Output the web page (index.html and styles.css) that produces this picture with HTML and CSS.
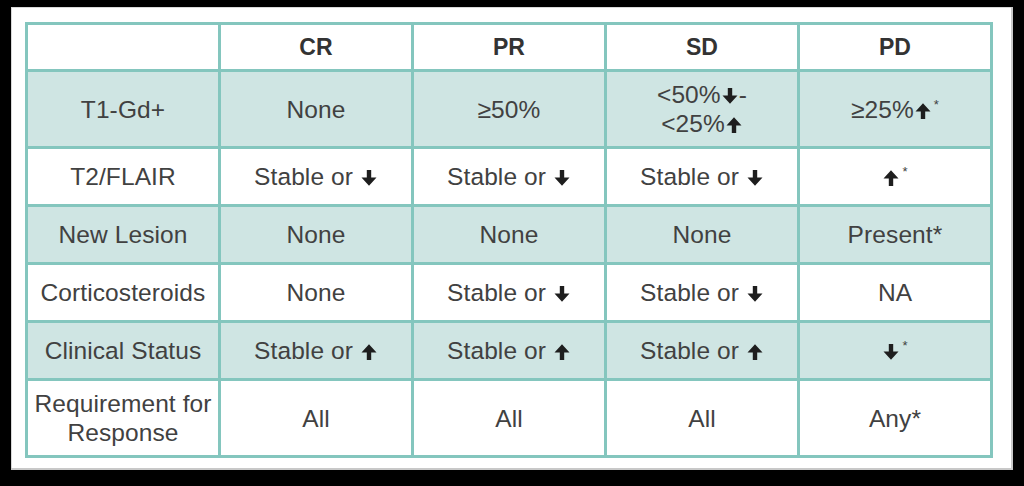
FILE: index.html
```html
<!DOCTYPE html>
<html>
<head>
<meta charset="utf-8">
<link rel="stylesheet" href="styles.css">
</head>
<body>
<svg width="0" height="0" class="defs">
  <defs>
    <symbol id="dn" viewBox="0 0 16 16"><path d="M5.8 0h4.4v7.6h5.3L8 15.8 0.5 7.6h5.3z"/></symbol>
    <symbol id="up" viewBox="0 0 16 16"><path d="M5.8 16h4.4V8.4h5.3L8 0.2 0.5 8.4h5.3z"/></symbol>
  </defs>
</svg>
<div class="card">
  <table class="resp">
    <tr class="head"><th></th><th>CR</th><th>PR</th><th>SD</th><th>PD</th></tr>
    <tr class="tall shade">
      <td>T1-Gd+</td><td>None</td><td>≥50%</td>
      <td>&lt;50%<svg class="ar"><use href="#dn"/></svg>-<br>&lt;25%<svg class="ar"><use href="#up"/></svg></td>
      <td>≥25%<svg class="ar"><use href="#up"/></svg><sup>*</sup></td>
    </tr>
    <tr>
      <td>T2/FLAIR</td>
      <td>Stable or <svg class="ar"><use href="#dn"/></svg></td>
      <td>Stable or <svg class="ar"><use href="#dn"/></svg></td>
      <td>Stable or <svg class="ar"><use href="#dn"/></svg></td>
      <td><svg class="ar"><use href="#up"/></svg><sup>*</sup></td>
    </tr>
    <tr class="shade">
      <td>New Lesion</td><td>None</td><td>None</td><td>None</td><td>Present*</td>
    </tr>
    <tr>
      <td>Corticosteroids</td><td>None</td>
      <td>Stable or <svg class="ar"><use href="#dn"/></svg></td>
      <td>Stable or <svg class="ar"><use href="#dn"/></svg></td>
      <td>NA</td>
    </tr>
    <tr class="shade">
      <td>Clinical Status</td>
      <td>Stable or <svg class="ar"><use href="#up"/></svg></td>
      <td>Stable or <svg class="ar"><use href="#up"/></svg></td>
      <td>Stable or <svg class="ar"><use href="#up"/></svg></td>
      <td><svg class="ar"><use href="#dn"/></svg><sup>*</sup></td>
    </tr>
    <tr class="tall">
      <td>Requirement for<br>Response</td><td>All</td><td>All</td><td>All</td><td>Any*</td>
    </tr>
  </table>
</div>
</body>
</html>
```

FILE: styles.css
```css
html, body {
  margin: 0;
  padding: 0;
  background: #000;
}
body {
  width: 1024px;
  height: 486px;
  overflow: hidden;
  font-family: "Liberation Sans", Arial, sans-serif;
}
.defs {
  position: absolute;
}
.card {
  margin: 7px 0 0 11px;
  width: 1002px;
  height: 463px;
  box-sizing: border-box;
  padding: 15px 0 0 14px;
  background: #fff;
  box-shadow: inset -2px -2px 0 #c8c8c8, inset 1px 1px 0 #d8d8d8;
}
.resp {
  border-collapse: collapse;
  table-layout: fixed;
  width: 968px;
}
.resp th, .resp td {
  border: 3px solid #84c6be;
  text-align: center;
  vertical-align: middle;
  padding: 0;
  color: #414141;
  font-size: 24.5px;
  font-weight: normal;
  line-height: 29px;
  letter-spacing: 0.1px;
}
.resp th {
  font-weight: bold;
  color: #333;
  font-size: 23px;
}
.resp tr.head { height: 47px; }
.resp tr { height: 58px; }
.resp tr.tall { height: 77px; }
.resp tr.shade td { background: #cfe5e3; }
.ar {
  width: 16px;
  height: 16px;
  fill: #1e1e1e;
  vertical-align: -1px;
  margin: 0 1px;
}
sup {
  font-size: 13px;
  line-height: 0;
  vertical-align: 9px;
  margin-left: 2px;
}
```
